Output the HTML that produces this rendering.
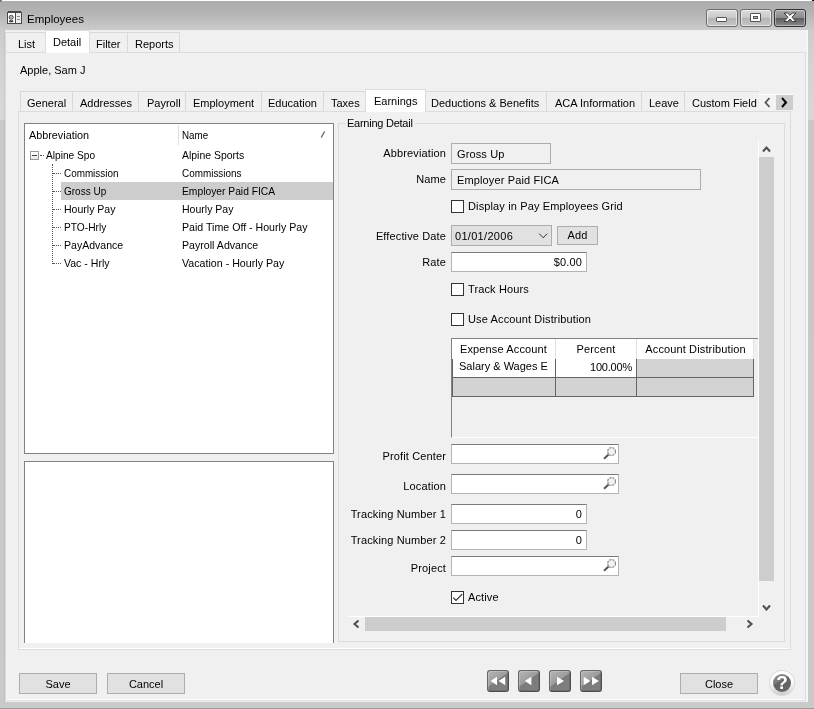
<!DOCTYPE html>
<html><head><meta charset="utf-8"><title>Employees</title>
<style>
html,body{margin:0;padding:0;}
body{width:814px;height:709px;position:relative;overflow:hidden;background:#bdbdbd;filter:grayscale(1);font-family:"Liberation Sans",sans-serif;font-size:12px;color:#000;}
.a{position:absolute;box-sizing:border-box;}
.t{position:absolute;white-space:nowrap;line-height:14px;}
.s{font-size:11px;}
.tr{font-size:11.5px;transform-origin:0 50%;}
.m{font-size:11px;letter-spacing:0.13px;}
.r{text-align:right;}
.box{position:absolute;box-sizing:border-box;border:1px solid #adadad;background:#f0f0f0;}
.wbox{position:absolute;box-sizing:border-box;border:1px solid #b4b4b4;border-top-color:#7a7a7a;background:#fff;}
.btn{position:absolute;box-sizing:border-box;border:1px solid #adadad;background:#e1e1e1;text-align:center;line-height:18px;}
.cb{position:absolute;box-sizing:border-box;width:13px;height:13px;border:1px solid #333;background:#fff;}
.tab{position:absolute;box-sizing:border-box;border:1px solid #d9d9d9;border-bottom:none;background:#f0f0f0;text-align:center;}
.tabsel{background:#fff;}
.nav{width:22px;height:22px;border:1px solid #4e4e4e;border-top-color:#666;border-left-color:#666;border-radius:3px;background:linear-gradient(145deg,#b6b6b6 0,#9c9c9c 45%,#7b7b7b 48%,#808080 100%);box-shadow:inset 1px 1px 0 rgba(255,255,255,.18),inset -1px -1px 0 rgba(0,0,0,.12);}
</style></head><body>
<!-- window frame -->
<div class="a" id="frame" style="left:0;top:0;width:814px;height:709px;background:linear-gradient(#fff 0,#fff 1px,#acacac 1px,#b3b3b3 12px,#cbcbcb 30px,#d2d2d2 60px,#d8d8d8 120px,#c8c8c8 120px,#cacaca 100%);"></div>
<div class="a" style="left:4px;top:30px;width:1px;height:673px;background:rgba(0,0,0,.05);"></div>
<div class="a" style="left:0;top:0;width:2px;height:1px;background:#777;"></div><div class="a" style="left:0;top:0;width:1px;height:2px;background:#777;"></div>
<div class="a" style="left:812px;top:0;width:2px;height:1px;background:#111;"></div>
<div class="a" style="left:0;top:708px;width:814px;height:1px;background:#9c9c9c;"></div>
<!-- title icon -->
<svg class="a" style="left:7px;top:11px" width="16" height="14" viewBox="0 0 16 14">
<rect x="0.5" y="1.5" width="14" height="11" fill="#fff" stroke="#4a4a4a"/>
<rect x="1" y="0" width="13" height="2" fill="#4a4a4a"/>
<rect x="9" y="2" width="5" height="10" fill="#ececec"/>
<line x1="8.5" y1="1" x2="8.5" y2="13" stroke="#4a4a4a"/>
<line x1="10" y1="5.5" x2="13" y2="5.5" stroke="#8a8a8a"/><line x1="10" y1="8.5" x2="13" y2="8.5" stroke="#8a8a8a"/>
<path d="M2 10.9 Q2 8.4 4.2 8.8 Q6.4 8.4 6.4 10.9 Q4.2 11.6 2 10.9 Z" fill="#404040"/>
<circle cx="4.2" cy="6.3" r="2" fill="#b4b4b4" stroke="#505050" stroke-width="1"/>
<path d="M3.4 8.8 L4.2 9.8 L5 8.8 Z" fill="#fff"/>
</svg>
<div class="t" style="left:27px;top:12px;font-size:11.5px;">Employees</div>
<!-- caption buttons -->
<div class="a" style="left:706px;top:9px;width:32px;height:18px;border:1px solid #6e6e6e;border-radius:3px;background:linear-gradient(#dcdcdc 0,#c9c9c9 48%,#b4b4b4 52%,#c6c6c6 100%);box-shadow:inset 0 0 0 1px rgba(255,255,255,.55);"></div>
<div class="a" style="left:716px;top:17px;width:11px;height:5px;border:1px solid #555;background:#fff;border-radius:1px;"></div>
<div class="a" style="left:740px;top:9px;width:32px;height:18px;border:1px solid #6e6e6e;border-radius:3px;background:linear-gradient(#dcdcdc 0,#c9c9c9 48%,#b4b4b4 52%,#c6c6c6 100%);box-shadow:inset 0 0 0 1px rgba(255,255,255,.55);"></div>
<div class="a" style="left:750px;top:13px;width:11px;height:9px;border:1px solid #555;background:#fff;border-radius:1px;"></div>
<div class="a" style="left:753px;top:16px;width:5px;height:3px;border:1px solid #555;background:#bbb;"></div>
<div class="a" style="left:774px;top:9px;width:32px;height:18px;border:1px solid #333;border-radius:3px;background:linear-gradient(#a8a8a8 0,#8c8c8c 48%,#5e5e5e 52%,#8a8a8a 100%);box-shadow:inset 0 0 0 1px rgba(255,255,255,.4);"></div>
<svg class="a" style="left:783px;top:12px" width="14" height="11" viewBox="0 0 14 11"><path d="M1 1 L4.6 1 L7 3.4 L9.4 1 L13 1 L9 5.2 L13 9.5 L9.4 9.5 L7 7 L4.6 9.5 L1 9.5 L5 5.2 Z" fill="#fff" stroke="#3a3a3a" stroke-width="1"/></svg>

<!-- client -->
<div class="a" id="client" style="left:5px;top:30px;width:803px;height:672px;background:#f0f0f0;"></div>

<!-- outer tabs -->
<div class="tab" style="left:5px;top:32px;width:41px;height:21px;"></div>
<div class="tab" style="left:89px;top:32px;width:39px;height:21px;"></div>
<div class="tab" style="left:127px;top:32px;width:53px;height:21px;"></div>
<div class="a" id="opage" style="left:5px;top:52px;width:801px;height:649px;border:1px solid #dcdcdc;"></div><div class="a" style="left:6px;top:699px;width:799px;height:1px;background:#fff;"></div><div class="a" style="left:806px;top:30px;width:2px;height:672px;background:#f6f6f6;"></div>
<div class="tab tabsel" style="left:45px;top:30px;width:45px;height:23px;border-color:#dcdcdc;"></div>
<div class="t s" style="left:18px;top:37px;">List</div>
<div class="t s" style="left:53px;top:35px;">Detail</div>
<div class="t s" style="left:96px;top:37px;">Filter</div>
<div class="t s" style="left:135px;top:37px;">Reports</div>

<div class="t s" style="left:20px;top:63px;">Apple, Sam J</div>

<!-- inner tabs -->
<div class="a" id="istrip" style="left:20px;top:91px;width:739px;height:21px;border:1px solid #d9d9d9;border-bottom:none;border-right:none;"></div>
<div class="a" id="ipage" style="left:18px;top:111px;width:773px;height:539px;border:1px solid #dcdcdc;"></div><div class="a" style="left:19px;top:648px;width:771px;height:1px;background:#fff;"></div>
<div class="a" style="left:72px;top:92px;width:1px;height:19px;background:#d9d9d9;"></div>
<div class="a" style="left:138px;top:92px;width:1px;height:19px;background:#d9d9d9;"></div>
<div class="a" style="left:185px;top:92px;width:1px;height:19px;background:#d9d9d9;"></div>
<div class="a" style="left:261px;top:92px;width:1px;height:19px;background:#d9d9d9;"></div>
<div class="a" style="left:323px;top:92px;width:1px;height:19px;background:#d9d9d9;"></div>
<div class="a" style="left:546px;top:92px;width:1px;height:19px;background:#d9d9d9;"></div>
<div class="a" style="left:641px;top:92px;width:1px;height:19px;background:#d9d9d9;"></div>
<div class="a" style="left:684px;top:92px;width:1px;height:19px;background:#d9d9d9;"></div>
<div class="tab tabsel" style="left:365px;top:89px;width:61px;height:23px;border-color:#dcdcdc;"></div>
<div class="t s" style="left:27px;top:96px;">General</div>
<div class="t s" style="left:80px;top:96px;">Addresses</div>
<div class="t s" style="left:147px;top:96px;">Payroll</div>
<div class="t s" style="left:193px;top:96px;">Employment</div>
<div class="t s" style="left:268px;top:96px;">Education</div>
<div class="t s" style="left:331px;top:96px;">Taxes</div>
<div class="t s" style="left:374px;top:94px;">Earnings</div>
<div class="t s" style="left:431px;top:96px;">Deductions &amp; Benefits</div>
<div class="t s" style="left:555px;top:96px;">ACA Information</div>
<div class="t s" style="left:649px;top:96px;">Leave</div>
<div class="t s" style="left:692px;top:96px;width:67px;overflow:hidden;">Custom Field</div>
<!-- tab scroll -->
<div class="a" style="left:759px;top:94px;width:34px;height:1px;background:#fff;"></div><div class="a" style="left:759px;top:95px;width:17px;height:15px;background:#f3f3f3;"></div>
<div class="a" style="left:776px;top:95px;width:17px;height:15px;background:#cdcdcd;"></div>
<svg class="a" style="left:759px;top:94px" width="34" height="17" viewBox="0 0 34 17"><path d="M10.5 4 L6.5 8.5 L10.5 13" fill="none" stroke="#555" stroke-width="1.8"/><path d="M23 4 L27 8.5 L23 13" fill="none" stroke="#000" stroke-width="2"/></svg>

<!-- tree list -->
<div class="wbox" style="left:24px;top:123px;width:310px;height:331px;border-color:#828282;"></div>
<div class="a" style="left:178px;top:125px;width:1px;height:20px;background:#e0e0e0;"></div>
<div class="t tr" style="left:29px;top:128px;transform:scaleX(0.94);">Abbreviation</div>
<div class="t tr" style="left:182px;top:128px;transform:scaleX(0.85);">Name</div>
<svg class="a" style="left:319px;top:129px" width="8" height="11" viewBox="0 0 8 11"><path d="M2.2 8.6 L5.6 2.4" stroke="#6a6a6a" stroke-width="1.2" fill="none"/></svg>
<div class="a" style="left:61px;top:182px;width:272px;height:18px;background:#cdcdcd;"></div>
<!-- tree lines -->
<div class="a" style="left:30px;top:151px;width:9px;height:9px;border:1px solid #9a9a9a;background:linear-gradient(#fff,#e8e8e8);"></div>
<div class="a" style="left:32px;top:155px;width:5px;height:1px;background:#444;"></div>
<div class="a" style="left:40px;top:155px;width:4px;height:1px;border-top:1px dotted #555;"></div>
<div class="a" style="left:52px;top:164px;width:1px;height:100px;border-left:1px dotted #555;"></div>
<div class="a" style="left:53px;top:173px;width:8px;height:1px;border-top:1px dotted #555;"></div>
<div class="a" style="left:53px;top:191px;width:8px;height:1px;border-top:1px dotted #555;"></div>
<div class="a" style="left:53px;top:209px;width:8px;height:1px;border-top:1px dotted #555;"></div>
<div class="a" style="left:53px;top:227px;width:8px;height:1px;border-top:1px dotted #555;"></div>
<div class="a" style="left:53px;top:245px;width:8px;height:1px;border-top:1px dotted #555;"></div>
<div class="a" style="left:53px;top:263px;width:8px;height:1px;border-top:1px dotted #555;"></div>
<div class="t tr" style="left:46px;top:148px;transform:scaleX(0.883);">Alpine Spo</div>
<div class="t tr" style="left:182px;top:148px;transform:scaleX(0.909);">Alpine Sports</div>
<div class="t tr" style="left:64px;top:166px;transform:scaleX(0.86);">Commission</div>
<div class="t tr" style="left:182px;top:166px;transform:scaleX(0.862);">Commissions</div>
<div class="t tr" style="left:64px;top:184px;transform:scaleX(0.87);">Gross Up</div>
<div class="t tr" style="left:182px;top:184px;transform:scaleX(0.894);">Employer Paid FICA</div>
<div class="t tr" style="left:64px;top:202px;transform:scaleX(0.915);">Hourly Pay</div>
<div class="t tr" style="left:182px;top:202px;transform:scaleX(0.915);">Hourly Pay</div>
<div class="t tr" style="left:64px;top:220px;transform:scaleX(0.886);">PTO-Hrly</div>
<div class="t tr" style="left:182px;top:220px;transform:scaleX(0.923);">Paid Time Off - Hourly Pay</div>
<div class="t tr" style="left:64px;top:238px;transform:scaleX(0.916);">PayAdvance</div>
<div class="t tr" style="left:182px;top:238px;transform:scaleX(0.923);">Payroll Advance</div>
<div class="t tr" style="left:64px;top:256px;transform:scaleX(0.917);">Vac - Hrly</div>
<div class="t tr" style="left:182px;top:256px;transform:scaleX(0.927);">Vacation - Hourly Pay</div>
<!-- lower white box -->
<div class="wbox" style="left:24px;top:461px;width:310px;height:182px;border-color:#828282;border-bottom:none;"></div>

<!-- group box -->
<div class="a" style="left:338px;top:123px;width:447px;height:519px;border:1px solid #dcdcdc;"></div>
<div class="t m" style="left:345px;top:116px;background:#f0f0f0;padding:0 2px;letter-spacing:-0.25px;">Earning Detail</div>

<!-- scroll panel -->
<div class="a" style="left:758px;top:140px;width:1px;height:477px;background:#fff;"></div>
<div class="a" style="left:348px;top:616px;width:411px;height:1px;background:#fff;"></div>
<div class="a" style="left:759px;top:157px;width:15px;height:424px;background:#cdcdcd;"></div>
<svg class="a" style="left:759px;top:140px" width="15" height="17" viewBox="0 0 15 17"><path d="M4 11.5 L7.5 7.5 L11 11.5" fill="none" stroke="#505050" stroke-width="2.1"/></svg>
<svg class="a" style="left:759px;top:599px" width="15" height="17" viewBox="0 0 15 17"><path d="M4 6.5 L7.5 10.5 L11 6.5" fill="none" stroke="#505050" stroke-width="2.1"/></svg>
<div class="a" style="left:365px;top:617px;width:361px;height:14px;background:#cdcdcd;"></div>
<svg class="a" style="left:348px;top:617px" width="17" height="14" viewBox="0 0 17 14"><path d="M10.5 3.5 L6.5 7 L10.5 10.5" fill="none" stroke="#505050" stroke-width="2.1"/></svg>
<svg class="a" style="left:741px;top:617px" width="17" height="14" viewBox="0 0 17 14"><path d="M6.5 3.5 L10.5 7 L6.5 10.5" fill="none" stroke="#505050" stroke-width="2.1"/></svg>

<!-- form -->
<div class="t m r" style="left:346px;width:100px;top:146px;">Abbreviation</div>
<div class="box" style="left:451px;top:143px;width:100px;height:21px;"></div>
<div class="t m" style="left:457px;top:147px;">Gross Up</div>
<div class="t m r" style="left:346px;width:100px;top:172px;">Name</div>
<div class="box" style="left:451px;top:169px;width:250px;height:21px;"></div>
<div class="t m" style="left:457px;top:173px;">Employer Paid FICA</div>
<div class="cb" style="left:451px;top:200px;"></div>
<div class="t m" style="left:468px;top:199px;">Display in Pay Employees Grid</div>
<div class="t m r" style="left:346px;width:100px;top:229px;">Effective Date</div>
<div class="a" style="left:451px;top:225px;width:101px;height:21px;border:1px solid #adadad;background:#e1e1e1;"></div>
<div class="t m" style="left:455px;top:229px;letter-spacing:0.3px;">01/01/2006</div>
<svg class="a" style="left:538px;top:232px" width="11" height="8" viewBox="0 0 11 8"><path d="M1.2 1.6 L5.2 5.8 L9.2 1.6" fill="none" stroke="#333" stroke-width="1"/></svg>
<div class="btn m" style="left:557px;top:226px;width:41px;height:19px;line-height:17px;">Add</div>
<div class="t m r" style="left:346px;width:100px;top:255px;">Rate</div>
<div class="wbox" style="left:451px;top:252px;width:136px;height:20px;"></div>
<div class="t m r" style="left:500px;width:82px;top:255px;">$0.00</div>
<div class="cb" style="left:451px;top:283px;"></div>
<div class="t m" style="left:468px;top:282px;">Track Hours</div>
<div class="cb" style="left:451px;top:313px;"></div>
<div class="t m" style="left:468px;top:312px;">Use Account Distribution</div>

<!-- grid -->
<div class="a" style="left:451px;top:338px;width:307px;height:100px;border-left:1px solid #828282;border-top:1px solid #828282;border-bottom:1px solid #fff;"></div>
<div class="a" style="left:452px;top:339px;width:302px;height:20px;background:#fff;border-right:1px solid #e4e4e4;"></div>
<div class="a" style="left:555px;top:339px;width:1px;height:20px;background:#e0e0e0;"></div>
<div class="a" style="left:636px;top:339px;width:1px;height:20px;background:#e0e0e0;"></div>
<div class="a" style="left:452px;top:359px;width:302px;height:38px;background:#d3d3d3;border:1px solid #646464;border-top:none;"></div>
<div class="a" style="left:452px;top:359px;width:184px;height:18px;background:#fff;border-left:1px solid #646464;"></div>
<div class="a" style="left:452px;top:377px;width:302px;height:1px;background:#646464;"></div>
<div class="a" style="left:555px;top:359px;width:1px;height:37px;background:#646464;"></div>
<div class="a" style="left:636px;top:359px;width:1px;height:37px;background:#646464;"></div>
<div class="t m" style="left:452px;width:103px;text-align:center;top:342px;">Expense Account</div>
<div class="t m" style="left:556px;width:80px;text-align:center;top:342px;">Percent</div>
<div class="t m" style="left:637px;width:117px;text-align:center;top:342px;">Account Distribution</div>
<div class="t m" style="left:459px;top:359px;letter-spacing:0;">Salary &amp; Wages E</div>
<div class="t m r" style="left:556px;width:76px;top:360px;letter-spacing:-0.2px;">100.00%</div>

<div class="t m r" style="left:346px;width:100px;top:449px;">Profit Center</div>
<div class="wbox" style="left:451px;top:444px;width:168px;height:20px;"></div>
<div class="t m r" style="left:346px;width:100px;top:479px;">Location</div>
<div class="wbox" style="left:451px;top:474px;width:168px;height:20px;"></div>
<div class="t m r" style="left:346px;width:100px;top:507px;">Tracking Number 1</div>
<div class="wbox" style="left:451px;top:504px;width:136px;height:20px;"></div>
<div class="t m r" style="left:500px;width:82px;top:507px;">0</div>
<div class="t m r" style="left:346px;width:100px;top:533px;">Tracking Number 2</div>
<div class="wbox" style="left:451px;top:530px;width:136px;height:20px;"></div>
<div class="t m r" style="left:500px;width:82px;top:533px;">0</div>
<div class="t m r" style="left:346px;width:100px;top:561px;">Project</div>
<div class="wbox" style="left:451px;top:556px;width:168px;height:20px;"></div>
<svg class="a mag" style="left:602px;top:446px" width="15" height="15" viewBox="0 0 15 15"><circle cx="9.6" cy="5.5" r="3.9" fill="#f2f2f2" stroke="#8c8c8c" stroke-width="1.2" stroke-dasharray="2.2 0.9"/><path d="M6.6 8.5 L2 12.8" stroke="#5a5a5a" stroke-width="2.1"/></svg>
<svg class="a mag" style="left:602px;top:476px" width="15" height="15" viewBox="0 0 15 15"><circle cx="9.6" cy="5.5" r="3.9" fill="#f2f2f2" stroke="#8c8c8c" stroke-width="1.2" stroke-dasharray="2.2 0.9"/><path d="M6.6 8.5 L2 12.8" stroke="#5a5a5a" stroke-width="2.1"/></svg>
<svg class="a mag" style="left:602px;top:558px" width="15" height="15" viewBox="0 0 15 15"><circle cx="9.6" cy="5.5" r="3.9" fill="#f2f2f2" stroke="#8c8c8c" stroke-width="1.2" stroke-dasharray="2.2 0.9"/><path d="M6.6 8.5 L2 12.8" stroke="#5a5a5a" stroke-width="2.1"/></svg>
<div class="cb" style="left:451px;top:591px;"></div>
<svg class="a" style="left:451px;top:591px" width="13" height="13" viewBox="0 0 13 13"><path d="M2.2 6.6 L5 9.4 L11.2 3.2" fill="none" stroke="#2a2a2a" stroke-width="1.15"/></svg>
<div class="t m" style="left:468px;top:590px;">Active</div>

<!-- bottom buttons -->
<div class="btn s" style="left:19px;top:673px;width:78px;height:21px;line-height:20px;">Save</div>
<div class="btn s" style="left:107px;top:673px;width:78px;height:21px;line-height:20px;">Cancel</div>
<div class="btn s" style="left:680px;top:673px;width:78px;height:21px;line-height:20px;">Close</div>
<!-- nav -->
<div class="a nav" style="left:487px;top:670px;"></div>
<div class="a nav" style="left:518px;top:670px;"></div>
<div class="a nav" style="left:549px;top:670px;"></div>
<div class="a nav" style="left:580px;top:670px;"></div>
<svg class="a" style="left:487px;top:670px" width="116" height="22" viewBox="0 0 116 22">
<g fill="#fff"><path d="M10 6.8 L10 15.2 L3.6 11 Z"/><path d="M18.2 6.8 L18.2 15.2 L11.6 11 Z"/>
<path d="M44.4 6.8 L44.4 15.2 L37.8 11 Z"/>
<path d="M70 6.8 L70 15.2 L77 11 Z"/>
<path d="M96.7 6.8 L96.7 15.2 L103.4 11 Z"/><path d="M105 6.8 L105 15.2 L111.8 11 Z"/></g></svg>
<!-- help -->
<div class="a" style="left:770px;top:671px;width:24px;height:24px;border-radius:50%;background:linear-gradient(#fff 0,#fafafa 50%,#cacaca 100%);box-shadow:0 0 0 1px #d8d8d8;"></div>
<div class="a" style="left:773px;top:674px;width:18px;height:18px;border-radius:50%;background:linear-gradient(150deg,#8c8c8c 0,#7a7a7a 38%,#626262 42%,#666 100%);"></div>
<div class="t" style="left:772px;top:673px;width:20px;text-align:center;font-weight:bold;font-size:19px;line-height:20px;color:#fff;">?</div>
</body></html>
